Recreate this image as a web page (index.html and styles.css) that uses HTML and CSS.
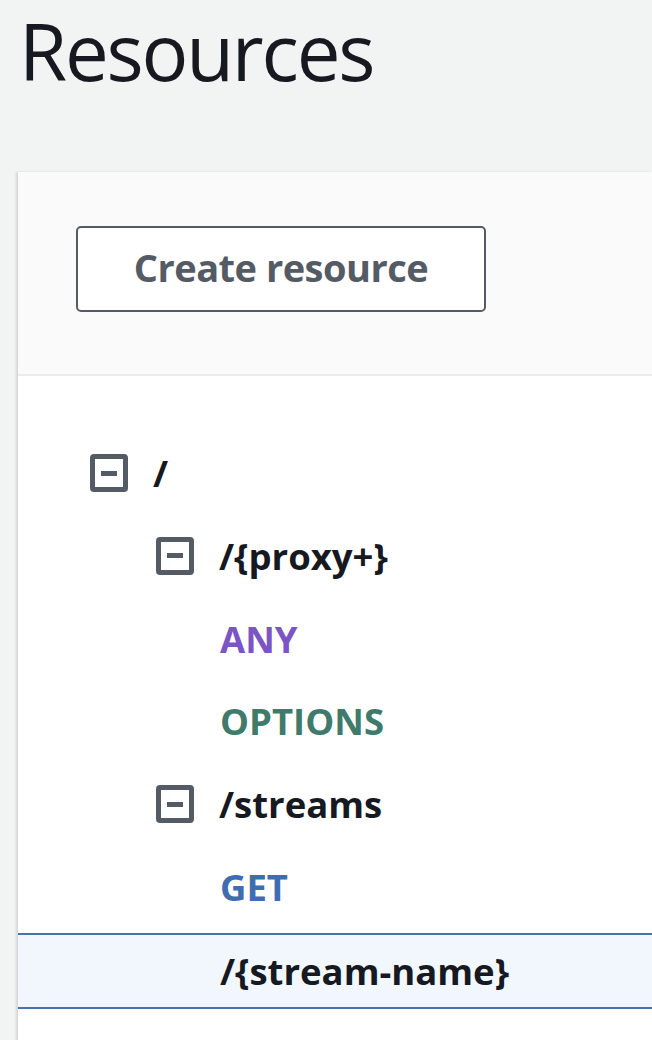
FILE: index.html
```html
<!DOCTYPE html>
<html>
<head>
<meta charset="utf-8">
<link rel="stylesheet" href="styles.css">
</head>
<body>
<h1 class="title">Resources</h1>
<section class="panel">
  <div class="panel-header">
    <button class="btn">Create resource</button>
  </div>
  <ul class="tree">
    <li class="row lvl0"><span class="toggle"></span><span class="label">/</span></li>
    <li class="row lvl1"><span class="toggle"></span><span class="label">/{proxy+}</span></li>
    <li class="row leaf"><span class="method any">ANY</span></li>
    <li class="row leaf"><span class="method options">OPTIONS</span></li>
    <li class="row lvl1"><span class="toggle"></span><span class="label">/streams</span></li>
    <li class="row leaf"><span class="method get">GET</span></li>
    <li class="row leaf selected"><span class="label">/{stream-name}</span></li>
  </ul>
</section>
</body>
</html>
```
FILE: styles.css
```css
html, body {
  margin: 0;
  padding: 0;
}
body {
  background: #f2f3f3;
  font-family: "Open Sans", "Noto Sans", sans-serif;
  color: #16191f;
  width: 652px;
  height: 1040px;
  overflow: hidden;
}
.title {
  margin: 0;
  padding: 6px 0 0 19px;
  font-size: 78px;
  font-weight: 400;
  line-height: 90px;
  letter-spacing: -2.2px;
  color: #16191f;
}
.panel {
  margin: 76px 0 0 18px;
  background: #ffffff;
  box-shadow: -2px 0 2px rgba(0, 0, 0, 0.12);
  min-height: 900px;
}
.panel-header {
  background: #fafafa;
  padding: 54px 0 62px 58px;
  border-bottom: 2px solid #eaeded;
}
.btn {
  display: flex;
  align-items: center;
  justify-content: center;
  width: 410px;
  height: 86px;
  background: #ffffff;
  border: 2px solid #545b64;
  border-radius: 5px;
  font-family: inherit;
  font-size: 38px;
  font-weight: 700;
  letter-spacing: -0.5px;
  color: #545b64;
  padding: 0 0 4px;
}
.tree {
  list-style: none;
  margin: 0;
  padding: 60px 0 0;
  display: flex;
  flex-direction: column;
  gap: 8.8px;
}
.row {
  height: 74px;
  box-sizing: border-box;
  display: flex;
  align-items: center;
  gap: 25px;
  font-size: 36.5px;
  font-weight: 700;
  letter-spacing: 0;
}
.lvl0 { padding-left: 72px; }
.lvl1 { padding-left: 138px; }
.leaf { padding-left: 202px; }
.toggle {
  width: 38px;
  height: 38px;
  box-sizing: border-box;
  border: 5px solid #545b64;
  border-radius: 4px;
  display: flex;
  align-items: center;
  justify-content: center;
  flex: none;
}
.toggle::before {
  content: "";
  width: 16px;
  height: 5px;
  background: #545b64;
}
.label { color: #16191f; }
.method.any { color: #7c55c4; }
.method.options { color: #3f7a6a; }
.method.get { color: #3e6db0; }
.selected {
  height: 76px;
  background: #f1f7fd;
  border-top: 2px solid #4772ae;
  border-bottom: 2px solid #4772ae;
}
```
